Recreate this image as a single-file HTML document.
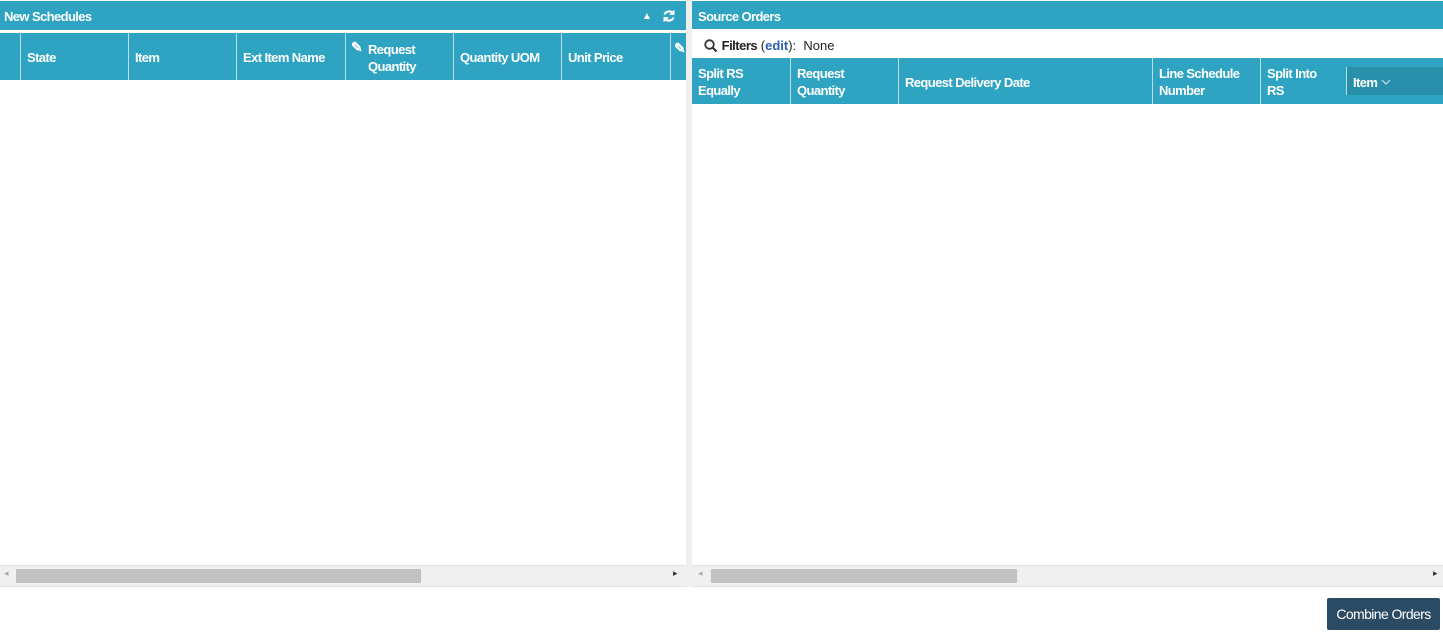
<!DOCTYPE html><html><head><style>
body{margin:0;width:1443px;height:636px;background:#fff;font-family:"Liberation Sans",sans-serif;position:relative;overflow:hidden;font-size:13px}
.a{position:absolute}
.t{background:#2ea3c2;color:#fff;font-weight:bold;letter-spacing:-0.6px}
.c{position:absolute;top:0;height:100%;border-left:1px solid #b9dfe9;box-sizing:border-box;padding-left:6px;display:flex;align-items:center;line-height:17px;padding-top:2px}
.sb{background:#f0f0f0;border-top:1px solid #e2e2e2;border-bottom:1px solid #e2e2e2}
.th{background:#c1c1c1;top:3px;height:14px}
</style></head><body>
<div class="a" style="left:686px;top:0;width:6px;height:587px;background:#efefef"></div>
<div class="a t" style="left:0;top:1px;width:686px;height:29px;line-height:31px;padding-left:4px;box-sizing:border-box">New Schedules
<span class="a" style="left:642px;top:0;font-size:10px">▲</span>
<svg class="a" style="left:662px;top:8px" width="14" height="14" viewBox="0 0 14 14" fill="none" stroke="#fff" stroke-width="2.2"><path d="M11.5 5A5 5 0 0 0 2.5 5.5M2.5 9A5 5 0 0 0 11.5 8.5"/><path d="M12 1v4.5H7.5M2 13V8.5h4.5" fill="#fff" stroke-width="1"/></svg></div>
<div class="a t" style="left:0;top:33px;width:686px;height:47px">
<div class="c" style="left:20px;width:108px">State</div>
<div class="c" style="left:128px;width:108px">Item</div>
<div class="c" style="left:236px;width:109px">Ext Item Name</div>
<div class="c" style="left:345px;width:108px;padding-left:22px">Request<br>Quantity<span class="a" style="left:5px;top:6px;font-size:14px">✎</span></div>
<div class="c" style="left:453px;width:108px">Quantity UOM</div>
<div class="c" style="left:561px;width:109px">Unit Price</div>
<div class="c" style="left:670px;width:16px;padding-left:3px;align-items:flex-start;padding-top:7px;font-size:14px">✎</div>
</div>
<div class="a sb" style="left:0;top:565px;width:686px;height:20px"><div class="a th" style="left:16px;width:405px"></div><span class="a" style="left:4px;top:2px;font-size:9px;color:#aaa">◂</span><span class="a" style="left:673px;top:2px;font-size:9px;color:#333">▸</span></div>

<div class="a t" style="left:692px;top:1px;width:751px;height:28px;line-height:31px;padding-left:6px;box-sizing:border-box">Source Orders</div>
<div class="a" style="left:704px;top:38px;font-size:13px;color:#222"><svg width="14" height="14" viewBox="0 0 14 14" style="vertical-align:-3px"><circle cx="5.5" cy="5.5" r="4.3" fill="none" stroke="#333" stroke-width="1.8"/><path d="M8.5 8.5l4 4" stroke="#333" stroke-width="2.2"/></svg> <b style="letter-spacing:-0.5px">Filters</b> (<b style="color:#2a5fb0">edit</b>): &nbsp;None</div>
<div class="a t" style="left:692px;top:58px;width:751px;height:46px">
<div class="c" style="left:0;width:98px;border:none">Split RS<br>Equally</div>
<div class="c" style="left:98px;width:108px">Request<br>Quantity</div>
<div class="c" style="left:206px;width:254px">Request Delivery Date</div>
<div class="c" style="left:460px;width:108px">Line Schedule<br>Number</div>
<div class="c" style="left:568px;width:86px">Split Into<br>RS</div>
<div class="c" style="left:654px;width:97px;background:#2890ab;height:28px;top:9px">Item <svg width="10" height="6" style="margin-left:4px" viewBox="0 0 10 6"><path d="M1 1l4 4 4-4" fill="none" stroke="#cde" stroke-width="1.2"/></svg></div>
</div>
<div class="a sb" style="left:692px;top:565px;width:751px;height:20px"><div class="a th" style="left:19px;width:306px"></div><span class="a" style="left:6px;top:2px;font-size:9px;color:#aaa">◂</span><span class="a" style="left:741px;top:2px;font-size:9px;color:#333">▸</span></div>

<div class="a" style="left:1327px;top:598px;width:113px;height:32px;background:#2b4a63;color:#fff;border-radius:2px;text-align:center;line-height:32px;font-size:14px;letter-spacing:-0.6px">Combine Orders</div>
</body></html>
